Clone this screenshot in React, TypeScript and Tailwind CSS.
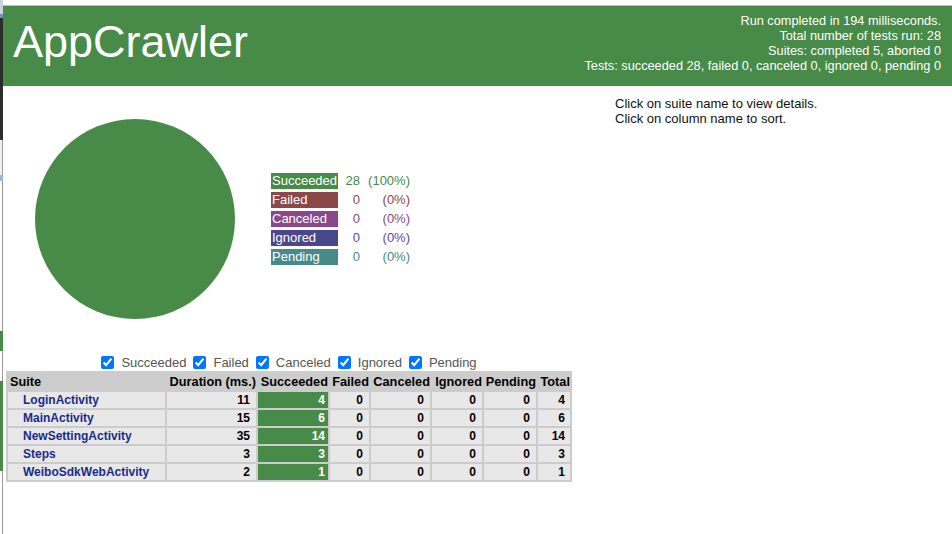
import React from 'react';

const GREEN = '#488a48';

type Suite = { name: string; duration: number; succeeded: number };

const suites: Suite[] = [
  { name: 'LoginActivity', duration: 11, succeeded: 4 },
  { name: 'MainActivity', duration: 15, succeeded: 6 },
  { name: 'NewSettingActivity', duration: 35, succeeded: 14 },
  { name: 'Steps', duration: 3, succeeded: 3 },
  { name: 'WeiboSdkWebActivity', duration: 2, succeeded: 1 },
];

const legend = [
  { label: 'Succeeded', count: 28, pct: '(100%)', bg: 'bg-[#488a48]', fg: 'text-[#488a48]' },
  { label: 'Failed', count: 0, pct: '(0%)', bg: 'bg-[#8a4848]', fg: 'text-[#8a4848]' },
  { label: 'Canceled', count: 0, pct: '(0%)', bg: 'bg-[#8a488a]', fg: 'text-[#8a488a]' },
  { label: 'Ignored', count: 0, pct: '(0%)', bg: 'bg-[#48488a]', fg: 'text-[#5a4a9a]' },
  { label: 'Pending', count: 0, pct: '(0%)', bg: 'bg-[#488a8a]', fg: 'text-[#488a8a]' },
];

const filters = ['Succeeded', 'Failed', 'Canceled', 'Ignored', 'Pending'];

// the sliver of another window visible on the left edge of the screenshot
function EdgeStrip() {
  return (
    <div className="flex w-[3px] shrink-0 flex-col">
      <div className="h-[14px] bg-[#c9d3dc]" />
      <div className="h-[4px] bg-[#6d8fb8]" />
      <div className="h-[122px] bg-[#2c2c2c]" />
      <div className="h-[35px] border-r border-[#999] bg-[#f0f0f0]" />
      <div className="h-[6px] bg-[#9bb8d8]" />
      <div className="h-[150px] border-r border-[#999] bg-white" />
      <div className="h-[20px] bg-[#488a48]" />
      <div className="h-[30px] border-r border-[#999] bg-white" />
      <div className="h-[90px] bg-[#488a48]" />
      <div className="flex-1 border-r border-[#999] bg-white" />
    </div>
  );
}

function Header() {
  return (
    <div className="flex h-[80px] items-start justify-between bg-[#488a48] text-white">
      <h1 className="ml-[10px] mt-[13px] text-[45px] leading-[45px]">AppCrawler</h1>
      <div className="mr-[11px] pt-[7px] text-right text-[12.75px] leading-[15px]">
        <div>Run completed in 194 milliseconds.</div>
        <div>Total number of tests run: 28</div>
        <div>Suites: completed 5, aborted 0</div>
        <div>Tests: succeeded 28, failed 0, canceled 0, ignored 0, pending 0</div>
      </div>
    </div>
  );
}

function Legend() {
  return (
    <div className="flex flex-col gap-[3px] text-[13px] leading-[16px]">
      {legend.map((l) => (
        <div key={l.label} className="flex">
          <div className={`w-[67px] h-[16px] px-[1px] text-white ${l.bg}`}>{l.label}</div>
          <div className={`w-[22px] text-right ${l.fg}`}>{l.count}</div>
          <div className={`w-[50px] text-right ${l.fg}`}>{l.pct}</div>
        </div>
      ))}
    </div>
  );
}

function SuiteTable() {
  const th = 'h-[17px] px-0 text-[12.75px] leading-[17px] font-bold text-black whitespace-nowrap overflow-hidden';
  const td = 'h-[16px] bg-[#e8e8e8] text-right text-[12px] leading-[16px] font-bold text-black';
  return (
    <table className="w-[566px] table-fixed border-separate border-spacing-[2px] bg-[#cccccc]">
      <thead>
        <tr>
          <th className={`${th} w-[157px] pl-[2px] text-left`}>Suite</th>
          <th className={`${th} w-[89px] text-right`}>Duration (ms.)</th>
          <th className={`${th} w-[70px] text-right`}>Succeeded</th>
          <th className={`${th} w-[39px] text-right`}>Failed</th>
          <th className={`${th} w-[59px] text-right`}>Canceled</th>
          <th className={`${th} w-[50px] text-right`}>Ignored</th>
          <th className={`${th} w-[52px] text-right`}>Pending</th>
          <th className={`${th} w-[32px] text-right`}>Total</th>
        </tr>
      </thead>
      <tbody>
        {suites.map((s) => (
          <tr key={s.name}>
            <td className="h-[16px] bg-[#e8e8e8] pl-[15px] text-[12px] leading-[16px] font-bold text-[#1a2b8c]">
              {s.name}
            </td>
            <td className={`${td} pr-[6px]`}>{s.duration}</td>
            <td className="h-[16px] bg-[#488a48] pr-[3px] text-right text-[12px] leading-[16px] font-bold text-white">
              {s.succeeded}
            </td>
            <td className={`${td} pr-[6px]`}>0</td>
            <td className={`${td} pr-[6px]`}>0</td>
            <td className={`${td} pr-[6px]`}>0</td>
            <td className={`${td} pr-[6px]`}>0</td>
            <td className={`${td} pr-[5px]`}>{s.succeeded}</td>
          </tr>
        ))}
      </tbody>
    </table>
  );
}

export default function App() {
  return (
    <div className="flex h-[534px] w-[952px] overflow-hidden bg-white font-['Liberation_Sans',Arial,sans-serif]">
      <EdgeStrip />
      <div className="flex flex-1 flex-col">
        <div className="h-[6px] border-b border-[#bdbdbd]" />
        <Header />
        <div className="flex">
          <div className="w-[612px] shrink-0">
            <div className="ml-[32px] mt-[33px] flex items-center gap-[36px]">
              <div className="h-[200px] w-[200px] rounded-full" style={{ background: GREEN }} />
              <Legend />
            </div>
            <div className="ml-[3px] mt-[35px] w-fit">
              <div className="flex h-[17px] items-center justify-center gap-[7px] text-[13px] leading-[17px] text-[#555]">
                {filters.map((f) => (
                  <label key={f} className="flex items-center gap-[7px]">
                    <input type="checkbox" defaultChecked className="h-[13px] w-[13px] accent-[#0075ff]" />
                    <span>{f}</span>
                  </label>
                ))}
              </div>
              <SuiteTable />
            </div>
          </div>
          <div className="pt-[10px] text-[13px] leading-[15px] text-[#111]">
            <div>Click on suite name to view details.</div>
            <div>Click on column name to sort.</div>
          </div>
        </div>
      </div>
    </div>
  );
}
